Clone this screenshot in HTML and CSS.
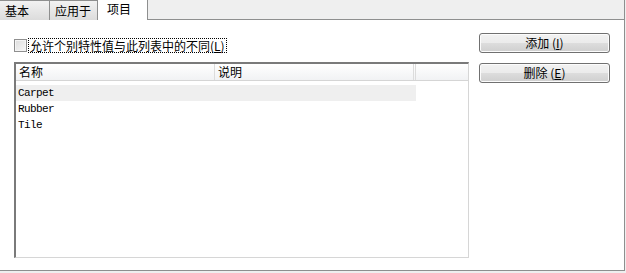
FILE: index.html
```html
<!DOCTYPE html>
<html lang="zh-CN">
<head>
    <meta charset="UTF-8">
    <title>项目</title>
    <link rel="stylesheet" href="styles.css">
</head>
<body>
    <div class="tabs">
        <div class="tab">基本</div>
        <div class="tab">应用于</div>
        <div class="tab active">项目</div>
        <div class="tab-fill"></div>
    </div>

    <div class="panel">
        <div class="left">
            <label class="check-row">
                <span class="checkbox"></span>
                <span class="check-text">允许个别特性值与此列表中的不同(<u>L</u>)</span>
            </label>

            <div class="listbox">
                <div class="list-head">
                    <div class="col col-name">名称</div>
                    <div class="col col-desc">说明</div>
                    <div class="col col-rest"></div>
                </div>
                <div class="list-body">
                    <div class="row selected">Carpet</div>
                    <div class="row">Rubber</div>
                    <div class="row">Tile</div>
                </div>
            </div>
        </div>

        <div class="right">
            <button class="btn">添加 (<u>I</u>)</button>
            <button class="btn">删除 (<u>E</u>)</button>
        </div>
    </div>
</body>
</html>
```

FILE: styles.css
```css
body {
    margin: 0;
    background-color: #efefef;
    font-family: "Noto Sans CJK SC", "Liberation Sans", sans-serif;
    font-size: 12px;
    color: #000;
}

.tabs {
    display: flex;
    height: 20px;
}

.tab {
    box-sizing: border-box;
    height: 20px;
    padding: 0 5px;
    white-space: nowrap;
    line-height: 19px;
    border: 1px solid #8e8f8f;
    border-bottom: none;
    border-right: none;
    background: linear-gradient(#f2f2f2, #dcdcdc);
}

.tab:nth-child(1) {
    width: 49px;
    border-left: none;
}

.tab:nth-child(2) {
    width: 48px;
}

.tab.active {
    width: 50px;
    background: #fff;
    padding-left: 9px;
    border-top: none;
    line-height: 17px;
}

.tab-fill {
    flex: 1;
    border-left: 1px solid #8e8f8f;
    border-bottom: 1px solid #8e8f8f;
    border-right: 1px solid #8e8f8f;
    margin-right: 1px;
}

.panel {
    display: flex;
    box-sizing: border-box;
    width: 625px;
    height: 251px;
    padding: 13px 0 0 14px;
    background-color: #fff;
    border-right: 1px solid #8e8f8f;
    border-bottom: 1px solid #8e8f8f;
}

.left {
    width: 455px;
}

.check-row {
    display: flex;
    align-items: center;
    height: 17px;
    margin-top: 4px;
}

.checkbox {
    box-sizing: border-box;
    width: 13px;
    height: 13px;
    border: 1px solid #8f8f8f;
    background: linear-gradient(135deg, #dcdcdc, #f8f8f8);
    box-shadow: inset 0 0 0 1px #f4f4f4;
}

.check-text {
    margin-left: 2px;
    padding: 0 1px;
    line-height: 13px;
    outline: 1px dotted #000;
}

.listbox {
    box-sizing: border-box;
    height: 196px;
    margin-top: 8px;
    border-top: 2px solid #7a7a7a;
    border-left: 2px solid #7a7a7a;
    border-right: 1px solid #d6d6d6;
    border-bottom: 1px solid #d6d6d6;
    background-color: #fff;
}

.list-head {
    display: flex;
    height: 16px;
    border-bottom: 1px solid #d5d5d5;
    background: linear-gradient(#ffffff, #f1f2f4);
}

.col {
    box-sizing: border-box;
    padding-left: 3px;
    line-height: 16px;
}

.col-name {
    width: 199px;
    border-right: 1px solid #dcdcdc;
}

.col-desc {
    width: 201px;
    border-right: 3px double #dcdcdc;
}

.col-rest {
    flex: 1;
}

.list-body {
    padding-top: 4px;
}

.row {
    width: 400px;
    height: 16px;
    padding-left: 2px;
    box-sizing: border-box;
    font-family: "Liberation Mono", monospace;
    font-size: 11px;
    letter-spacing: -0.6px;
    line-height: 17px;
}

.row.selected {
    background-color: #efefef;
}

.right {
    display: flex;
    flex-direction: column;
    gap: 10px;
    margin-left: 10px;
}

.btn {
    width: 131px;
    height: 20px;
    padding: 0;
    font-family: "Noto Sans CJK SC", "Liberation Sans", sans-serif;
    font-size: 12px;
    line-height: 16px;
    color: #000;
    border: 1px solid #707070;
    border-radius: 3px;
    background: linear-gradient(#f2f2f2 0%, #ebebeb 50%, #dddddd 51%, #cfcfcf 100%);
    box-shadow: inset 0 0 0 1px #fcfcfc;
}
```
